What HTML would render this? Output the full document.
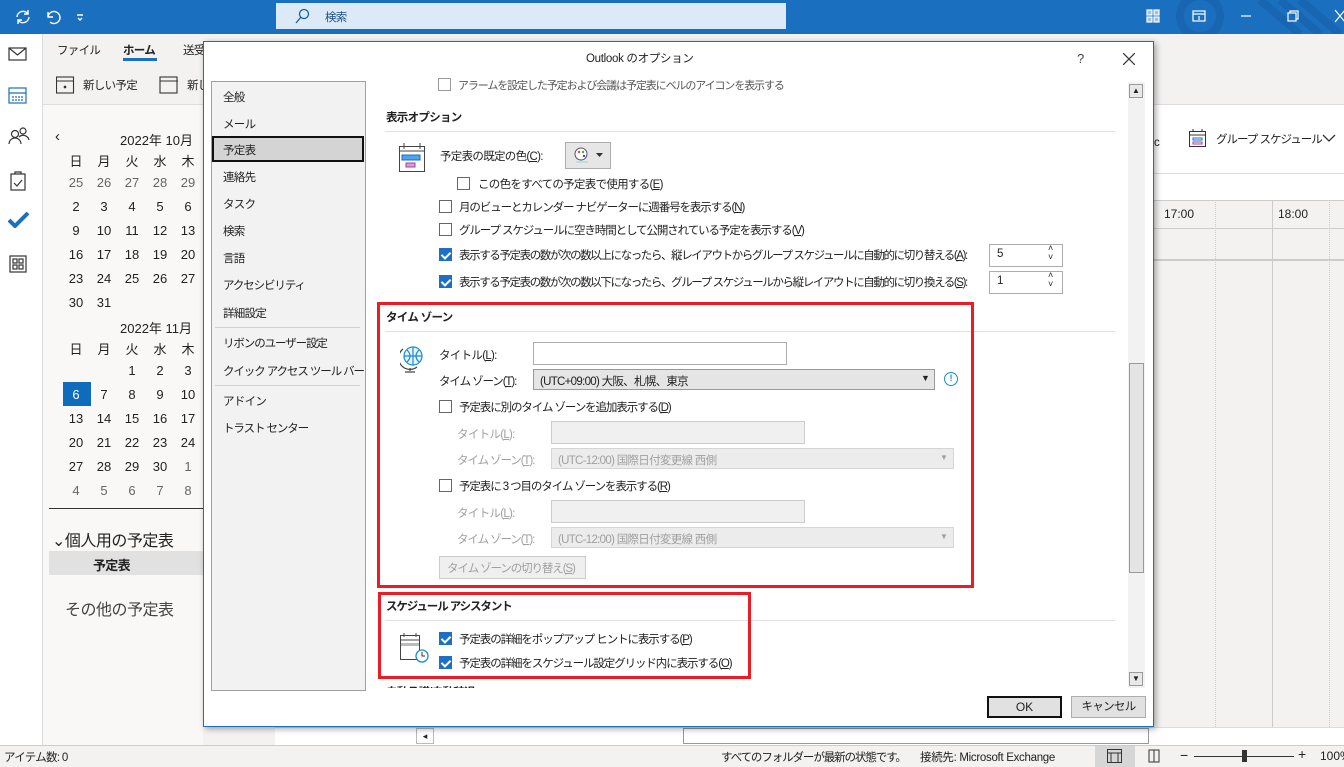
<!DOCTYPE html>
<html><head><meta charset="utf-8">
<style>
*{margin:0;padding:0;box-sizing:border-box}
body{width:1344px;height:767px;overflow:hidden;position:relative;background:#f3f2f1;font-family:"Liberation Sans","Noto Sans CJK JP",sans-serif;font-size:11px;color:#222}
.a{position:absolute}
.t{position:absolute;white-space:nowrap;font-size:11.5px;letter-spacing:-0.7px}
.n{letter-spacing:-1.1px}
.cb{position:absolute;width:13px;height:13px;border:1px solid #333;background:#fff}
.cb.on{background:#1c6fc4;border-color:#1c6fc4}
.cb.on:after{content:"";position:absolute;left:3px;top:1px;width:4px;height:7px;border:solid #fff;border-width:0 2px 2px 0;transform:rotate(45deg)}
.dis{color:#a0a0a0}
.cal span{position:absolute;width:28px;text-align:center;font-size:13px}
</style></head><body>
<!-- title bar -->
<div class="a" style="left:0;top:0;width:1344px;height:34px;background:#1a6fbe"></div>
<svg class="a" style="left:880px;top:0" width="464" height="34"><g fill="none" stroke="#1866b2" stroke-width="8"><circle cx="320" cy="16" r="20"/><path d="M380 0 L420 34 M400 0 L440 34 M420 0 L460 34"/></g></svg>
<svg class="a" style="left:14px;top:8px" width="80" height="18" fill="none" stroke="#fff" stroke-width="1.4"><path d="M3 9a6 6 0 0 1 11-3M15 9a6 6 0 0 1-11 3M14 2v4h-4M4 16v-4h4"/><path d="M34 4v5h5M34 9a6 6 0 1 1 2 5"/><path d="M63 7h6M64 10l2 2 2-2"/></svg>
<div class="a" style="left:276px;top:3px;width:510px;height:26px;background:#dce9f6"></div>
<svg class="a" style="left:294px;top:8px" width="16" height="16" fill="none" stroke="#1a5fa8" stroke-width="1.3"><circle cx="10" cy="6" r="4.5"/><path d="M7 9l-5 6"/></svg>
<div class="t" style="left:325px;top:9px;color:#1d4f87">検索</div>
<svg class="a" style="left:1145px;top:8px" width="200" height="18" fill="none" stroke="#fff" stroke-width="1.2"><rect x="2" y="2" width="5" height="5" fill="#9fc3e6"/><rect x="9" y="2" width="5" height="5" fill="#9fc3e6"/><rect x="2" y="9" width="5" height="5" fill="#9fc3e6"/><rect x="9" y="9" width="5" height="5" fill="#9fc3e6"/><rect x="48" y="3" width="12" height="10"/><path d="M48 6h12M54 12V8"/><path d="M96 8h10"/><rect x="143" y="5" width="8" height="8"/><path d="M145 5V3h8v8h-2"/><path d="M190 2l10 12M200 2l-10 12"/></svg>
<!-- left rail -->
<div class="a" style="left:0;top:34px;width:43px;height:711px;background:#fff;border-right:1px solid #ddd"></div>
<svg class="a" style="left:7px;top:44px" width="24" height="240" fill="none" stroke="#333" stroke-width="1.2"><rect x="2" y="4" width="17" height="12"/><path d="M2 4l8.5 7 8.5-7"/><rect x="2" y="44" width="17" height="15" stroke="#1a6fbe"/><path d="M2 49h17" stroke="#1a6fbe"/><path d="M5 53h11M5 56h11" stroke="#1a6fbe" stroke-dasharray="2 1"/><circle cx="8" cy="90" r="3.5"/><path d="M2 100a6 6 0 0 1 12 0"/><circle cx="16" cy="87" r="3"/><path d="M12 93a6 6 0 0 1 10 3"/><rect x="4" y="130" width="14" height="16"/><path d="M8 130v-2h6v2M7 139l3 3 5-6"/><rect x="3" y="212" width="16" height="16"/><rect x="6" y="215" width="4" height="4"/><rect x="12" y="215" width="4" height="4"/><rect x="6" y="221" width="4" height="4"/><rect x="12" y="221" width="4" height="4"/></svg>
<svg class="a" style="left:8px;top:212px" width="22" height="16"><path d="M1 8l6 6L20 1" fill="none" stroke="#1a6fbe" stroke-width="4"/></svg>
<!-- ribbon -->
<div class="t" style="left:57px;top:42px">ファイル</div>
<div class="t" style="left:123px;top:42px;font-weight:bold">ホーム</div>
<div class="a" style="left:123px;top:58px;width:34px;height:3px;background:#1a6fbe"></div>
<div class="t" style="left:183px;top:42px">送受</div>
<svg class="a" style="left:56px;top:75px" width="130" height="20" fill="none" stroke="#333" stroke-width="1.1"><rect x="0.5" y="2" width="17" height="16"/><path d="M0 6h18"/><circle cx="9" cy="12" r="0.8" fill="#333"/><rect x="104" y="2" width="17" height="16"/><path d="M104 6h18"/></svg>
<div class="t" style="left:83px;top:77px">新しい予定</div>
<div class="t" style="left:187px;top:77px">新し</div>
<div class="a" style="left:43px;top:104px;width:160px;height:641px;background:#f9f8f7;border-top:1px solid #ddd"></div>
<div class="t" style="left:55px;top:128px;font-size:15px">‹</div>
<div class="t" style="left:120px;top:130px;font-size:13px;letter-spacing:0">2022年 10月</div>
<div class="cal">
<div class="a" style="left:62px;top:151px"><span style="left:0">日</span><span style="left:28px">月</span><span style="left:56px">火</span><span style="left:84px">水</span><span style="left:112px">木</span></div>
<div class="a" style="left:62px;top:175px;color:#666"><span style="left:0">25</span><span style="left:28px">26</span><span style="left:56px">27</span><span style="left:84px">28</span><span style="left:112px">29</span></div>
<div class="a" style="left:62px;top:199px"><span style="left:0">2</span><span style="left:28px">3</span><span style="left:56px">4</span><span style="left:84px">5</span><span style="left:112px">6</span></div>
<div class="a" style="left:62px;top:223px"><span style="left:0">9</span><span style="left:28px">10</span><span style="left:56px">11</span><span style="left:84px">12</span><span style="left:112px">13</span></div>
<div class="a" style="left:62px;top:247px"><span style="left:0">16</span><span style="left:28px">17</span><span style="left:56px">18</span><span style="left:84px">19</span><span style="left:112px">20</span></div>
<div class="a" style="left:62px;top:271px"><span style="left:0">23</span><span style="left:28px">24</span><span style="left:56px">25</span><span style="left:84px">26</span><span style="left:112px">27</span></div>
<div class="a" style="left:62px;top:295px"><span style="left:0">30</span><span style="left:28px">31</span></div>
<div class="t" style="left:120px;top:318px;font-size:13px;letter-spacing:0">2022年 11月</div>
<div class="a" style="left:62px;top:339px"><span style="left:0">日</span><span style="left:28px">月</span><span style="left:56px">火</span><span style="left:84px">水</span><span style="left:112px">木</span></div>
<div class="a" style="left:62px;top:363px"><span style="left:56px">1</span><span style="left:84px">2</span><span style="left:112px">3</span></div>
<div class="a" style="left:63px;top:382px;width:28px;height:24px;background:#0f6cbd"></div>
<div class="a" style="left:62px;top:387px"><span style="left:0;color:#fff">6</span><span style="left:28px">7</span><span style="left:56px">8</span><span style="left:84px">9</span><span style="left:112px">10</span></div>
<div class="a" style="left:62px;top:411px"><span style="left:0">13</span><span style="left:28px">14</span><span style="left:56px">15</span><span style="left:84px">16</span><span style="left:112px">17</span></div>
<div class="a" style="left:62px;top:435px"><span style="left:0">20</span><span style="left:28px">21</span><span style="left:56px">22</span><span style="left:84px">23</span><span style="left:112px">24</span></div>
<div class="a" style="left:62px;top:459px"><span style="left:0">27</span><span style="left:28px">28</span><span style="left:56px">29</span><span style="left:84px">30</span><span style="left:112px;color:#666">1</span></div>
<div class="a" style="left:62px;top:483px;color:#666"><span style="left:0">4</span><span style="left:28px">5</span><span style="left:56px">6</span><span style="left:84px">7</span><span style="left:112px">8</span></div>
</div>
<div class="a" style="left:49px;top:508px;width:155px;height:1px;background:#333"></div>
<div class="t" style="left:52px;top:527px;font-size:16px;letter-spacing:-0.5px">⌄個人用の予定表</div>
<div class="a" style="left:49px;top:551px;width:155px;height:24px;background:#e1e1e1"></div>
<div class="t" style="left:93px;top:555px;font-weight:bold;font-size:13px">予定表</div>
<div class="t" style="left:65px;top:596px;font-size:16px;color:#444;letter-spacing:-0.5px">その他の予定表</div>
<!-- right calendar area -->
<div class="a" style="left:1153px;top:104px;width:191px;height:96px;background:#fff;border-top:1px solid #ddd"></div>
<div class="a" style="left:1153px;top:173px;width:191px;height:1px;background:#ddd"></div>
<div class="a" style="left:1153px;top:200px;width:191px;height:1px;background:#ccc"></div>
<div class="a" style="left:1153px;top:228px;width:191px;height:1px;background:#ccc"></div>
<div class="a" style="left:1153px;top:259px;width:191px;height:2px;background:#ccc"></div>
<div class="a" style="left:1272px;top:200px;width:1px;height:527px;background:#ccc"></div>
<div class="a" style="left:1215px;top:200px;width:0;height:527px;border-left:1px dotted #ccc"></div>
<div class="a" style="left:1329px;top:200px;width:0;height:527px;border-left:1px dotted #ccc"></div>
<div class="t" style="left:1164px;top:207px;font-size:12px;letter-spacing:0">17:00</div>
<div class="t" style="left:1278px;top:207px;font-size:12px;letter-spacing:0">18:00</div>
<svg class="a" style="left:1189px;top:129px" width="18" height="19" fill="none" stroke="#333"><rect x="0.5" y="2.5" width="16" height="15"/><path d="M0 6h17M4 0v3M13 0v3"/><rect x="4" y="9" width="9" height="2" stroke="#1a6fbe"/><rect x="4" y="13" width="9" height="2" stroke="#a33ea1"/></svg>
<div class="t" style="left:1216px;top:131px;letter-spacing:-1px">グループ スケジュール</div>
<svg class="a" style="left:1322px;top:133px" width="14" height="10" fill="none" stroke="#333" stroke-width="1.3"><path d="M1 2l6 6 6-6"/></svg>
<div class="t" style="left:1154px;top:137px">c</div>
<!-- bottom scroll area -->
<div class="a" style="left:275px;top:727px;width:1069px;height:18px;background:#fff;border-top:1px solid #ddd"></div>
<div class="a" style="left:416px;top:728px;width:18px;height:16px;border:1px solid #bbb;background:#fff;font-size:9px;text-align:center;line-height:14px">◂</div>
<div class="a" style="left:683px;top:728px;width:466px;height:16px;border:1px solid #999;background:#fff"></div>
<!-- status bar -->
<div class="a" style="left:0;top:745px;width:1344px;height:22px;background:#f3f2f1;border-top:1px solid #ccc"></div>
<div class="t" style="left:4px;top:749px">アイテム数: 0</div>
<div class="t n" style="left:721px;top:749px">すべてのフォルダーが最新の状態です。</div>
<div class="t" style="left:920px;top:749px;letter-spacing:-0.3px">接続先: Microsoft Exchange</div>
<div class="a" style="left:1095px;top:746px;width:40px;height:21px;background:#d6d6d6"></div>
<svg class="a" style="left:1107px;top:749px" width="80" height="15" fill="none" stroke="#333"><rect x="0.5" y="0.5" width="14" height="13"/><path d="M0 4h15M4 4v10M11 4v10"/><path d="M42 1h5v12h-5zM47 1h5v12h-5z"/></svg>
<div class="t" style="left:1180px;top:747px;font-size:14px">−</div>
<div class="a" style="left:1194px;top:756px;width:100px;height:1px;background:#333"></div>
<div class="a" style="left:1242px;top:750px;width:5px;height:12px;background:#333"></div>
<div class="t" style="left:1298px;top:746px;font-size:14px">+</div>
<div class="t" style="left:1320px;top:749px;font-size:12px;letter-spacing:0">100%</div>

<!-- dialog -->
<div class="a" style="left:203px;top:41px;width:951px;height:686px;background:#fff;border:1px solid #1a6fbe;box-shadow:2px 2px 6px rgba(0,0,0,.35)"></div>
<div class="t" style="left:586px;top:50px;letter-spacing:-0.3px">Outlook のオプション</div>
<div class="t" style="left:1077px;top:51px;font-size:13px;color:#444">?</div>
<svg class="a" style="left:1123px;top:53px" width="12" height="12" stroke="#333" stroke-width="1.2"><path d="M0 0l12 12M12 0L0 12"/></svg>
<div class="a" style="left:211px;top:81px;width:155px;height:610px;background:#f2f2f2;border:1px solid #a0a0a0"></div>
<div class="a" style="left:212px;top:136px;width:152px;height:26px;background:#d4d4d4;border:2px solid #111"></div>
<div class="t" style="left:223px;top:89px">全般</div>
<div class="t" style="left:223px;top:116px">メール</div>
<div class="t" style="left:223px;top:142px">予定表</div>
<div class="t" style="left:223px;top:169px">連絡先</div>
<div class="t" style="left:223px;top:196px">タスク</div>
<div class="t" style="left:223px;top:223px">検索</div>
<div class="t" style="left:223px;top:250px">言語</div>
<div class="t n" style="left:223px;top:277px">アクセシビリティ</div>
<div class="t" style="left:223px;top:305px">詳細設定</div>
<div class="a" style="left:215px;top:327px;width:145px;height:1px;background:#d0d0d0"></div>
<div class="t n" style="left:223px;top:335px">リボンのユーザー設定</div>
<div class="t n" style="left:223px;top:363px">クイック アクセス ツール バー</div>
<div class="a" style="left:215px;top:385px;width:145px;height:1px;background:#d0d0d0"></div>
<div class="t" style="left:223px;top:393px">アドイン</div>
<div class="t n" style="left:223px;top:420px">トラスト センター</div>
<!-- scrollbar -->
<div class="a" style="left:1128px;top:82px;width:17px;height:606px;background:#f2f2f2"></div>
<div class="a" style="left:1129px;top:84px;width:14px;height:14px;border:1px solid #999;background:#e8e8e8;font-size:8px;text-align:center;line-height:12px">▲</div>
<div class="a" style="left:1129px;top:363px;width:15px;height:210px;border:1px solid #999;background:#e4e4e4"></div>
<div class="a" style="left:1129px;top:672px;width:14px;height:14px;border:1px solid #999;background:#e8e8e8;font-size:8px;text-align:center;line-height:12px">▼</div>
<!-- content -->
<div class="cb" style="left:438px;top:78px;border-color:#999"></div>
<div class="t n" style="left:458px;top:77px;color:#555;font-size:11px">アラームを設定した予定および会議は予定表にベルのアイコンを表示する</div>
<div class="t" style="left:386px;top:109px;font-weight:bold">表示オプション</div>
<div class="a" style="left:385px;top:131px;width:730px;height:1px;background:#e1e1e1"></div>
<svg class="a" style="left:398px;top:142px" width="28" height="32" fill="none" stroke="#444"><rect x="1.5" y="4.5" width="25" height="25"/><path d="M1 9h26M6 1v6M22 1v6"/><rect x="4" y="13" width="18" height="5" fill="#4fa3ea" stroke="#1a6fbe"/><rect x="8" y="21" width="9" height="4" fill="#d5a0d6" stroke="#a33ea1"/></svg>
<div class="t" style="left:440px;top:148px">予定表の既定の色(<u>C</u>):</div>
<div class="a" style="left:565px;top:142px;width:46px;height:27px;background:#e6e6e6;border:1px solid #adadad"></div>
<svg class="a" style="left:574px;top:147px" width="30" height="17"><circle cx="7" cy="7" r="6" fill="#fff" stroke="#555"/><circle cx="5" cy="5" r="1.2" fill="#e44"/><circle cx="9" cy="5" r="1.2" fill="#4a4"/><circle cx="10" cy="9" r="1.2" fill="#44e"/><rect x="2" y="14" width="12" height="2" fill="#bde"/><path d="M22 6h7l-3.5 4z" fill="#333"/></svg>
<div class="cb" style="left:457px;top:177px;border-color:#666"></div>
<div class="t" style="left:478px;top:176px">この色をすべての予定表で使用する(<u>E</u>)</div>
<div class="cb" style="left:439px;top:200px;border-color:#666"></div>
<div class="t n" style="left:459px;top:199px">月のビューとカレンダー ナビゲーターに週番号を表示する(<u>N</u>)</div>
<div class="cb" style="left:439px;top:223px;border-color:#666"></div>
<div class="t n" style="left:459px;top:222px">グループ スケジュールに空き時間として公開されている予定を表示する(<u>V</u>)</div>
<div class="cb on" style="left:439px;top:248px"></div>
<div class="t n" style="left:459px;top:247px;letter-spacing:-1.4px">表示する予定表の数が次の数以上になったら、縦レイアウトからグループ スケジュールに自動的に切り替える(<u>A</u>):</div>
<div class="a" style="left:989px;top:244px;width:74px;height:23px;border:1px solid #adadad;background:#fff"></div>
<div class="t" style="left:997px;top:248px">5</div><div class="t" style="left:1048px;top:244px;font-size:9px;line-height:9px">˄<br>˅</div>
<div class="cb on" style="left:439px;top:275px"></div>
<div class="t n" style="left:459px;top:274px;letter-spacing:-1.4px">表示する予定表の数が次の数以下になったら、グループ スケジュールから縦レイアウトに自動的に切り換える(<u>S</u>):</div>
<div class="a" style="left:989px;top:271px;width:74px;height:23px;border:1px solid #adadad;background:#fff"></div>
<div class="t" style="left:997px;top:275px">1</div><div class="t" style="left:1048px;top:271px;font-size:9px;line-height:9px">˄<br>˅</div>

<div class="t" style="left:386px;top:309px;font-weight:bold">タイム ゾーン</div>
<div class="a" style="left:385px;top:331px;width:730px;height:1px;background:#e1e1e1"></div>
<svg class="a" style="left:400px;top:344px" width="24" height="30" fill="none" stroke-width="1.2"><circle cx="13" cy="12" r="9" stroke="#1a8ad4" fill="#e6f3fc"/><path d="M4 12h18M13 3v18M7 6q6 6 0 12M19 6q-6 6 0 12" stroke="#1a8ad4"/><path d="M3 5a11 11 0 0 0 14 18M10 24v3M5 28h10" stroke="#444"/></svg>
<div class="t" style="left:439px;top:347px">タイトル(<u>L</u>):</div>
<div class="a" style="left:533px;top:342px;width:254px;height:23px;border:1px solid #adadad;background:#fff"></div>
<div class="t n" style="left:439px;top:373px">タイム ゾーン(<u>T</u>):</div>
<div class="a" style="left:533px;top:369px;width:402px;height:21px;border:1px solid #999;background:#e5e5e5"></div>
<div class="t" style="left:540px;top:373px">(UTC+09:00) 大阪、札幌、東京</div>
<div class="t" style="left:921px;top:373px;font-size:9px">▼</div>
<div class="a" style="left:944px;top:372px;width:14px;height:14px;border:1.5px solid #1a8ad4;border-radius:50%;color:#1a8ad4;font-size:9px;text-align:center;line-height:11px;font-weight:bold">!</div>
<div class="cb" style="left:439px;top:400px;border-color:#666"></div>
<div class="t n" style="left:459px;top:399px">予定表に別のタイム ゾーンを追加表示する(<u>D</u>)</div>
<div class="t dis" style="left:457px;top:426px">タイトル(<u>L</u>):</div>
<div class="a" style="left:551px;top:421px;width:254px;height:23px;border:1px solid #ccc;background:#f0f0f0"></div>
<div class="t dis n" style="left:457px;top:452px">タイム ゾーン(<u>T</u>):</div>
<div class="a" style="left:551px;top:448px;width:403px;height:21px;border:1px solid #d5d5d5;background:#ececec"></div>
<div class="t dis" style="left:558px;top:452px">(UTC-12:00) 国際日付変更線 西側</div>
<div class="t dis" style="left:940px;top:453px;font-size:8px">▼</div>
<div class="cb" style="left:439px;top:479px;border-color:#666"></div>
<div class="t n" style="left:459px;top:478px">予定表に 3 つ目のタイム ゾーンを表示する(<u>R</u>)</div>
<div class="t dis" style="left:457px;top:505px">タイトル(<u>L</u>):</div>
<div class="a" style="left:551px;top:500px;width:254px;height:23px;border:1px solid #ccc;background:#f0f0f0"></div>
<div class="t dis n" style="left:457px;top:531px">タイム ゾーン(<u>T</u>):</div>
<div class="a" style="left:551px;top:527px;width:403px;height:21px;border:1px solid #d5d5d5;background:#ececec"></div>
<div class="t dis" style="left:558px;top:531px">(UTC-12:00) 国際日付変更線 西側</div>
<div class="t dis" style="left:940px;top:532px;font-size:8px">▼</div>
<div class="a" style="left:439px;top:556px;width:147px;height:23px;border:1px solid #ccc;background:#efefef"></div>
<div class="t dis n" style="left:447px;top:560px">タイム ゾーンの切り替え(<u>S</u>)</div>

<div class="t n" style="left:386px;top:598px;font-weight:bold">スケジュール アシスタント</div>
<div class="a" style="left:385px;top:620px;width:730px;height:1px;background:#e1e1e1"></div>
<svg class="a" style="left:392px;top:632px" width="40" height="34" fill="none" stroke="#444"><rect x="8.5" y="3.5" width="19" height="24"/><path d="M8 8h20M12 1v4M24 1v4"/><rect x="9" y="11" width="18" height="3" fill="#bbb" stroke="none"/><circle cx="30" cy="24" r="6" fill="#fff" stroke="#1a8ad4" stroke-width="1.3"/><path d="M30 20v4h3" stroke="#333"/></svg>
<div class="cb on" style="left:439px;top:632px"></div>
<div class="t n" style="left:459px;top:631px">予定表の詳細をポップアップ ヒントに表示する(<u>P</u>)</div>
<div class="cb on" style="left:439px;top:656px"></div>
<div class="t n" style="left:459px;top:655px">予定表の詳細をスケジュール設定グリッド内に表示する(<u>O</u>)</div>
<div class="t" style="left:386px;top:684px;font-weight:bold;height:6px;overflow:hidden">自動承諾/自動辞退</div>
<div class="a" style="left:376px;top:688px;width:752px;height:4px;background:#fff"></div>

<!-- red boxes -->
<div class="a" style="left:377px;top:302px;width:597px;height:286px;border:3px solid #ed1c24"></div>
<div class="a" style="left:378px;top:592px;width:373px;height:87px;border:3px solid #ed1c24"></div>

<div class="a" style="left:987px;top:696px;width:75px;height:22px;border:2px solid #111;background:#e1e1e1;text-align:center;line-height:18px;font-size:12px">OK</div>
<div class="a" style="left:1071px;top:696px;width:75px;height:22px;border:1px solid #adadad;background:#e1e1e1;text-align:center;line-height:20px;font-size:11.5px;letter-spacing:-0.7px">キャンセル</div>
</body></html>
